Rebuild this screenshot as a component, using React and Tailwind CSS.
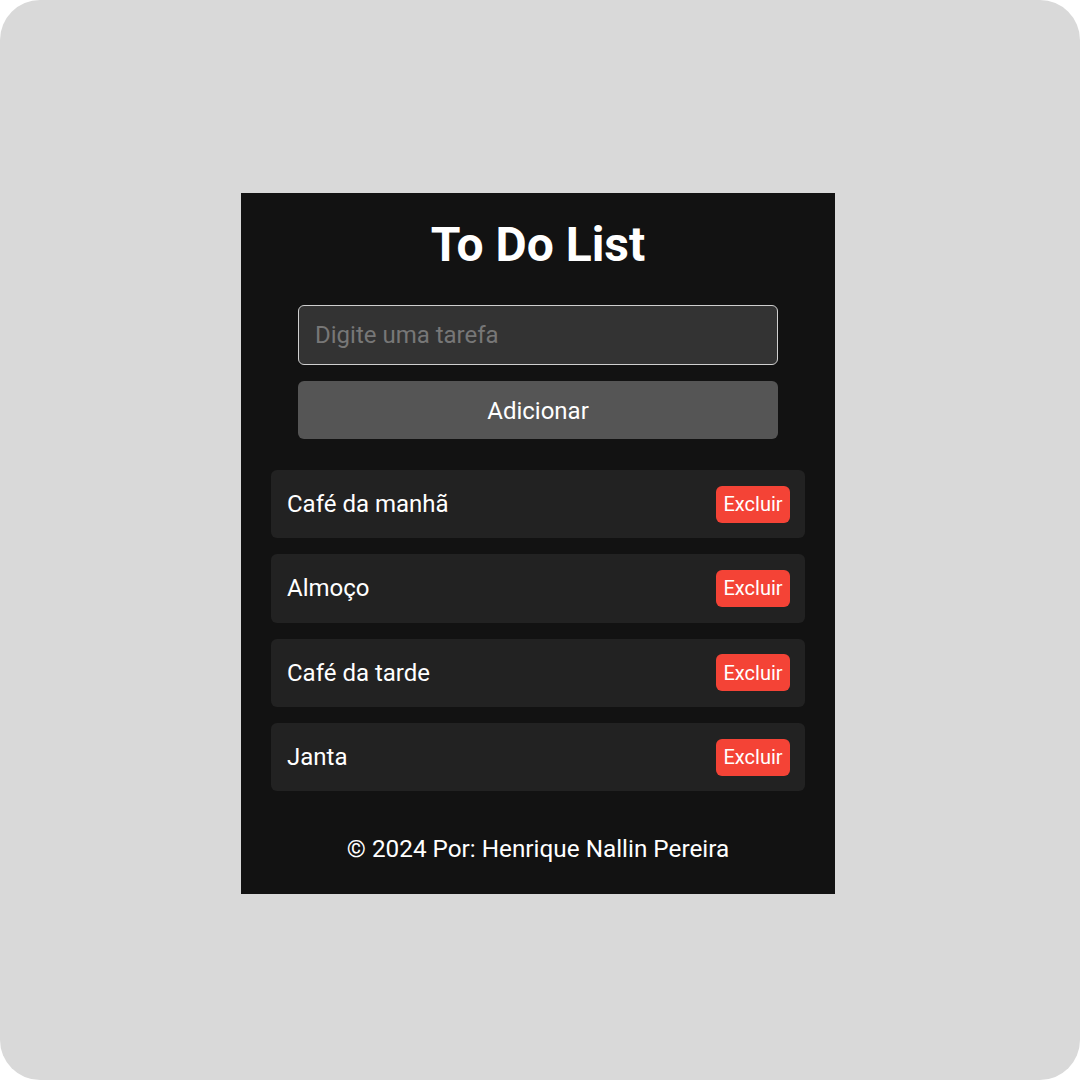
export default function App() {
  const tasks = ["Café da manhã", "Almoço", "Café da tarde", "Janta"];
  return (
    <div className="w-[1080px] h-[1080px] bg-white" style={{ fontFamily: "Roboto, 'Noto Sans', sans-serif" }}>
      <div className="w-full h-full rounded-[40px] bg-[#d9d9d9] flex justify-center items-start pt-[193px] pr-[4px]">
        <div className="w-[594px] bg-[#121212] px-[30px] pt-[24px] pb-[31px] flex flex-col">
          <h1 className="text-center text-white font-bold text-[48px] leading-[56px]">To Do List</h1>
          <div className="w-[480px] mx-auto mt-[32px] flex flex-col gap-[16px]">
            <input
              type="text"
              placeholder="Digite uma tarefa"
              className="h-[60px] w-full rounded-[6px] border border-[#cfcfcf] bg-[#333333] px-[16px] text-[24px] text-white placeholder:text-[#777777] outline-none"
            />
            <button className="h-[58px] w-full rounded-[6px] bg-[#555555] text-white text-[24px] pt-[2px]">Adicionar</button>
          </div>
          <ul className="mt-[31px] flex flex-col gap-[16px]">
            {tasks.map((t) => (
              <li key={t} className="h-[68.3px] rounded-[6px] bg-[#222222] flex items-center justify-between pl-[16px] pr-[15px]">
                <span className="text-white text-[24px]">{t}</span>
                <button className="h-[37px] w-[74px] rounded-[6px] bg-[#f44336] text-white text-[20px]">Excluir</button>
              </li>
            ))}
          </ul>
          <p className="mt-[44px] text-center text-white text-[24.3px] leading-[28px]">© 2024 Por: Henrique Nallin Pereira</p>
        </div>
      </div>
    </div>
  );
}
